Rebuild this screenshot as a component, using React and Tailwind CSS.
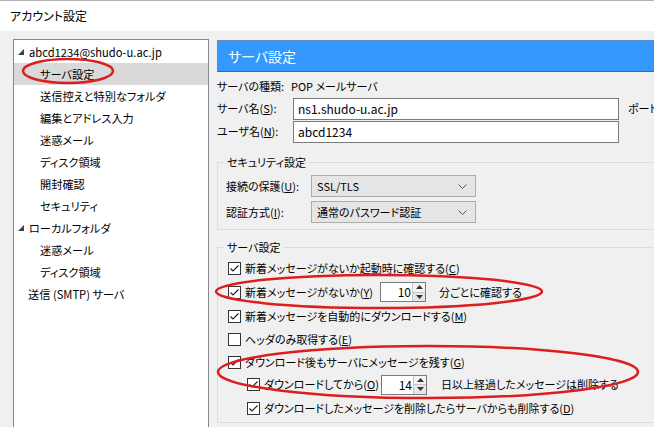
import React from 'react'

const font = "font-['Noto_Sans_CJK_JP','Noto_Sans',sans-serif] [font-feature-settings:'palt']"

function Check({ checked = true }) {
  return (
    <span className="w-[13px] h-[13px] shrink-0 border border-[#333] bg-white flex items-center justify-center">
      {checked && (
        <svg width="11" height="11" viewBox="0 0 11 11">
          <polyline points="1.5,5.5 4,8 9.5,2.5" fill="none" stroke="#222" strokeWidth="1.2" />
        </svg>
      )}
    </span>
  )
}

function Spinner({ value }) {
  return (
    <div className="w-[46px] h-[20px] border border-[#7a7a7a] bg-white flex shrink-0">
      <div className="flex-1 flex items-center justify-end pr-[1px] text-[12px]">{value}</div>
      <div className="w-[13px] flex flex-col border-l border-[#c8c8c8]">
        <div className="flex-1 flex items-center justify-center border-b border-[#c8c8c8] bg-[#f4f4f4]">
          <svg width="7" height="4" viewBox="0 0 7 4"><polygon points="0,4 7,4 3.5,0" fill="#333" /></svg>
        </div>
        <div className="flex-1 flex items-center justify-center bg-[#e6e6e6]">
          <svg width="7" height="4" viewBox="0 0 7 4"><polygon points="0,0 7,0 3.5,4" fill="#333" /></svg>
        </div>
      </div>
    </div>
  )
}

function Select({ value }) {
  return (
    <div className="w-[165px] h-[22px] shrink-0 border border-[#adadad] bg-[#e5e5e5] flex items-center pl-[5px] pr-[8px]">
      <span className="flex-1">{value}</span>
      <svg width="9" height="5" viewBox="0 0 9 5">
        <polyline points="0.5,0.5 4.5,4.5 8.5,0.5" fill="none" stroke="#555" strokeWidth="1" />
      </svg>
    </div>
  )
}

function TreeRow({ children, indent, arrow, selected }) {
  return (
    <div className={`h-[22px] flex items-center whitespace-nowrap ${selected ? 'bg-[#d9d9d9]' : ''}`}>
      {arrow && (
        <svg className="ml-[4px] mr-[5px]" width="6" height="6" viewBox="0 0 6 6">
          <polygon points="6,0 6,6 0,6" fill="#404040" />
        </svg>
      )}
      <span className={indent ? 'pl-[26px]' : arrow ? '' : 'pl-[14px]'}>{children}</span>
    </div>
  )
}

export default function App() {
  return (
    <div className={`relative w-[654px] h-[427px] overflow-hidden bg-[#f0f0f0] text-[11px] text-black ${font}`}>
      <div className="h-[31px] bg-white border-t border-[#b4b4b4] flex items-center pl-[10px] text-[12px]">アカウント設定</div>

      <div className="flex pt-[8px] pl-[13px] gap-[8px]">
        <div className="w-[196px] h-[400px] shrink-0 bg-white border border-[#828790] pt-px text-[11.2px]">
          <TreeRow arrow>abcd1234@shudo-u.ac.jp</TreeRow>
          <TreeRow indent selected>サーバ設定</TreeRow>
          <TreeRow indent>送信控えと特別なフォルダ</TreeRow>
          <TreeRow indent>編集とアドレス入力</TreeRow>
          <TreeRow indent>迷惑メール</TreeRow>
          <TreeRow indent>ディスク領域</TreeRow>
          <TreeRow indent>開封確認</TreeRow>
          <TreeRow indent>セキュリティ</TreeRow>
          <TreeRow arrow>ローカルフォルダ</TreeRow>
          <TreeRow indent>迷惑メール</TreeRow>
          <TreeRow indent>ディスク領域</TreeRow>
          <TreeRow>送信 (SMTP) サーバ</TreeRow>
        </div>

        <div className="flex-1 min-w-0 pt-px">
          <div className="h-[32px] bg-[#3399ff] border border-[#5a8ac6] border-b-[#2a6cb8] flex items-center pl-[10px] text-white text-[14px]">
            サーバ設定
          </div>

          <div className="mt-[3px] h-[22px] flex items-center">
            <span className="w-[74px] shrink-0">サーバの種類:</span>
            <span>POP メールサーバ</span>
          </div>
          <div className="h-[23px] flex items-center">
            <span className="w-[76px] shrink-0">サーバ名(<u>S</u>):</span>
            <div className="w-[326px] h-[22px] shrink-0 border border-[#7a7a7a] bg-white flex items-center pl-[4px] text-[12px]">ns1.shudo-u.ac.jp</div>
            <span className="ml-[9px] whitespace-nowrap">ポート</span>
          </div>
          <div className="h-[23px] flex items-center">
            <span className="w-[76px] shrink-0">ユーザ名(<u>N</u>):</span>
            <div className="w-[326px] h-[22px] shrink-0 border border-[#7a7a7a] bg-white flex items-center pl-[4px] text-[12px]">abcd1234</div>
          </div>

          <fieldset className="mt-[11px] w-[460px] border border-[#dcdcdc] pl-[6px] pb-[6px]">
            <legend className="px-[3px] leading-[16px]">セキュリティ設定</legend>
            <div className="pl-[2px] flex flex-col gap-[4px] mt-[5px]">
              <div className="flex items-center">
                <span className="w-[85px] shrink-0">接続の保護(<u>U</u>):</span>
                <Select value="SSL/TLS" />
              </div>
              <div className="flex items-center">
                <span className="w-[85px] shrink-0">認証方式(<u>I</u>):</span>
                <Select value="通常のパスワード認証" />
              </div>
            </div>
          </fieldset>

          <fieldset className="mt-[9px] w-[460px] border border-[#dcdcdc] pl-[6px] pb-[1px]">
            <legend className="px-[3px] leading-[16px]">サーバ設定</legend>
            <div className="pl-[4px] mt-[2px] whitespace-nowrap">
              <div className="h-[23px] flex items-center gap-[4px]">
                <Check /><span>新着メッセージがないか起動時に確認する(<u>C</u>)</span>
              </div>
              <div className="h-[24px] flex items-center gap-[4px]">
                <Check /><span className="w-[131px] shrink-0">新着メッセージがないか(<u>Y</u>)</span>
                <Spinner value="10" />
                <span className="ml-[9px]">分ごとに確認する</span>
              </div>
              <div className="h-[24px] flex items-center gap-[4px]">
                <Check /><span>新着メッセージを自動的にダウンロードする(<u>M</u>)</span>
              </div>
              <div className="h-[23px] flex items-center gap-[4px]">
                <Check checked={false} /><span>ヘッダのみ取得する(<u>E</u>)</span>
              </div>
              <div className="h-[22px] flex items-center gap-[4px]">
                <Check /><span>ダウンロード後もサーバにメッセージを残す(<u>G</u>)</span>
              </div>
              <div className="h-[23px] flex items-center gap-[4px] pl-[19px]">
                <Check /><span className="w-[113px] shrink-0">ダウンロードしてから(<u>O</u>)</span>
                <Spinner value="14" />
                <span className="ml-[10px]">日以上経過したメッセージは削除する</span>
              </div>
              <div className="h-[25px] flex items-center gap-[4px] pl-[19px]">
                <Check /><span>ダウンロードしたメッセージを削除したらサーバからも削除する(<u>D</u>)</span>
              </div>
            </div>
          </fieldset>
        </div>
      </div>

      <svg className="absolute inset-0 pointer-events-none" width="654" height="427" viewBox="0 0 654 427">
        <g fill="none" stroke="#dc1e1e" strokeWidth="2.5">
          <ellipse cx="68" cy="71" rx="45" ry="12" />
          <ellipse cx="379" cy="291.5" rx="163" ry="16.5" />
          <ellipse cx="428" cy="372" rx="210" ry="26" />
        </g>
      </svg>
    </div>
  )
}
